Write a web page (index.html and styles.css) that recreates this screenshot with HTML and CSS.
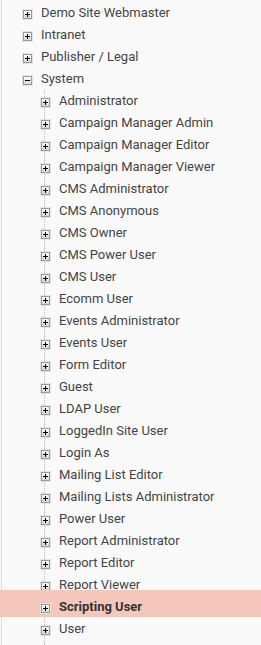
FILE: index.html
```html
<!DOCTYPE html>
<html>
<head>
<meta charset="utf-8">
<link rel="stylesheet" href="styles.css">
</head>
<body>
<div class="tree">
  <div class="row top"><span class="tog plus"></span><span class="lbl">Demo Site Webmaster</span></div>
  <div class="row top"><span class="tog plus"></span><span class="lbl">Intranet</span></div>
  <div class="row top"><span class="tog plus"></span><span class="lbl">Publisher / Legal</span></div>
  <div class="row top"><span class="tog minus"></span><span class="lbl">System</span></div>
  <div class="children">
    <div class="row child"><span class="tog plus"></span><span class="lbl">Administrator</span></div>
    <div class="row child"><span class="tog plus"></span><span class="lbl">Campaign Manager Admin</span></div>
    <div class="row child"><span class="tog plus"></span><span class="lbl">Campaign Manager Editor</span></div>
    <div class="row child"><span class="tog plus"></span><span class="lbl">Campaign Manager Viewer</span></div>
    <div class="row child"><span class="tog plus"></span><span class="lbl">CMS Administrator</span></div>
    <div class="row child"><span class="tog plus"></span><span class="lbl">CMS Anonymous</span></div>
    <div class="row child"><span class="tog plus"></span><span class="lbl">CMS Owner</span></div>
    <div class="row child"><span class="tog plus"></span><span class="lbl">CMS Power User</span></div>
    <div class="row child"><span class="tog plus"></span><span class="lbl">CMS User</span></div>
    <div class="row child"><span class="tog plus"></span><span class="lbl">Ecomm User</span></div>
    <div class="row child"><span class="tog plus"></span><span class="lbl">Events Administrator</span></div>
    <div class="row child"><span class="tog plus"></span><span class="lbl">Events User</span></div>
    <div class="row child"><span class="tog plus"></span><span class="lbl">Form Editor</span></div>
    <div class="row child"><span class="tog plus"></span><span class="lbl">Guest</span></div>
    <div class="row child"><span class="tog plus"></span><span class="lbl">LDAP User</span></div>
    <div class="row child"><span class="tog plus"></span><span class="lbl">LoggedIn Site User</span></div>
    <div class="row child"><span class="tog plus"></span><span class="lbl">Login As</span></div>
    <div class="row child"><span class="tog plus"></span><span class="lbl">Mailing List Editor</span></div>
    <div class="row child"><span class="tog plus"></span><span class="lbl">Mailing Lists Administrator</span></div>
    <div class="row child"><span class="tog plus"></span><span class="lbl">Power User</span></div>
    <div class="row child"><span class="tog plus"></span><span class="lbl">Report Administrator</span></div>
    <div class="row child"><span class="tog plus"></span><span class="lbl">Report Editor</span></div>
    <div class="row child"><span class="tog plus"></span><span class="lbl">Report Viewer</span></div>
    <div class="row child selected"><span class="tog plus"></span><span class="lbl">Scripting User</span></div>
    <div class="row child"><span class="tog plus"></span><span class="lbl">User</span></div>
  </div>
</div>
</body>
</html>
```
FILE: styles.css
```css
html, body {
  margin: 0;
  padding: 0;
  background: #fafafa;
}
body {
  width: 261px;
  height: 645px;
  overflow: hidden;
  font-family: Roboto, "Liberation Sans", sans-serif;
  font-size: 13px;
  color: #444;
}
.tree {
  border-left: 1px solid #dcdcdc;
  margin-left: 1px;
  min-height: 645px;
  padding-top: 2px;
  box-sizing: border-box;
}
.row {
  position: relative;
  display: flex;
  align-items: center;
  height: 22px;
  white-space: nowrap;
}
.row.top {
  padding-left: 20px;
}
.row.child {
  padding-left: 38px;
}
.children {
  background-image: linear-gradient(to bottom, #bbb 50%, transparent 50%);
  background-size: 1px 2px;
  background-repeat: repeat-y;
  background-position: 42px 0;
  padding-bottom: 20px;
}
.tog {
  position: relative;
  width: 9px;
  height: 9px;
  box-sizing: border-box;
  border: 1px solid #9a9a9a;
  background: linear-gradient(#fdfdfd, #d8d8d8);
  box-shadow: 0 0 0 1px #e4e4e4;
  margin-right: 9px;
  margin-left: 1px;
  margin-top: 3px;
  flex: none;
}
.tog::before {
  content: "";
  position: absolute;
  left: 1px;
  top: 3px;
  width: 5px;
  height: 1px;
  background: #000;
}
.tog.plus::after {
  content: "";
  position: absolute;
  left: 3px;
  top: 1px;
  width: 1px;
  height: 5px;
  background: #000;
}
.lbl {
  line-height: 22px;
}
.selected::before {
  content: "";
  position: absolute;
  left: -2px;
  top: -6px;
  height: 27px;
  background: #f5c7bb;
  width: 263px;
}
.selected .tog, .selected .lbl {
  position: relative;
}
.selected .lbl {
  font-weight: bold;
  color: #333;
}
```
